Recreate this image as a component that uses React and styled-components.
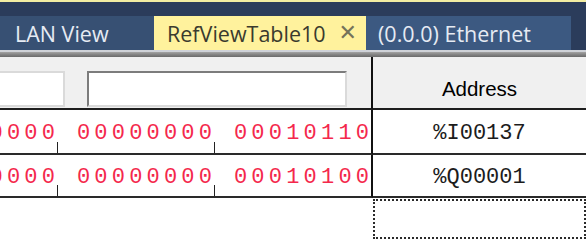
import React from "react";
import styled, { createGlobalStyle } from "styled-components";

const GlobalStyle = createGlobalStyle`
  body {
    margin: 0;
    background: #ffffff;
    overflow: hidden;
  }
`;

const Page = styled.div`
  width: 586px;
  height: 240px;
  overflow: hidden;
  background: #ffffff;
`;

const TabStrip = styled.div`
  display: flex;
  align-items: flex-end;
  height: 48px;
  border-top: 2px solid #f2eda2;
  background: #2b3c5b;
`;

const Tab = styled.div`
  display: flex;
  align-items: center;
  justify-content: space-between;
  box-sizing: border-box;
  width: ${props => props.width}px;
  height: 34px;
  padding: 0 ${props => (props.active ? 9 : 0)}px 0 ${props => props.pad}px;
  background: ${props =>
    props.active ? "#fff29d" : props.tone === "light" ? "#3c5981" : "#375073"};
  color: ${props => (props.active ? "#3a3a2e" : "#e6ebf3")};
  font-family: "Open Sans", "Noto Sans", sans-serif;
  font-size: 21.5px;
  white-space: nowrap;
`;

const Close = styled.span`
  color: #75735a;
  font-family: "DejaVu Sans", sans-serif;
  font-size: 22px;
  line-height: 1;
`;

const TabRule = styled.div`
  height: 7px;
  background: linear-gradient(
    #cfd2d8 0,
    #cfd2d8 2px,
    #a4a4a4 2px,
    #8a8a8a 4px,
    #6a6a6a 7px
  );
`;

const Grid = styled.div`
  display: grid;
  grid-template-columns: 373px 1fr;
`;

const HeadCell = styled.div`
  display: flex;
  align-items: center;
  justify-content: ${props => (props.bits ? "flex-end" : "center")};
  gap: 22px;
  box-sizing: border-box;
  height: 53px;
  padding: 12px ${props => (props.bits ? 24 : 0)}px 0 0;
  background: #f0f0f0;
  border-bottom: 2px solid #1e1e1e;
  border-right: ${props => (props.bits ? "2px solid #111" : "none")};
  overflow: hidden;
  font-family: "Liberation Sans", Arial, sans-serif;
  font-size: 20.5px;
  color: #000;
`;

const FilterBox = styled.div`
  flex: none;
  box-sizing: border-box;
  width: ${props => props.width}px;
  height: 36px;
  background: #ffffff;
  border: 2px solid #dadada;
  border-top-color: ${props => (props.sunken ? "#7c7c7c" : "#dadada")};
  border-left-color: ${props => (props.sunken ? "#7c7c7c" : "#dadada")};
`;

const BitsCell = styled.div`
  display: flex;
  justify-content: flex-end;
  align-items: stretch;
  box-sizing: border-box;
  height: ${props => props.h}px;
  padding-right: 2px;
  border-bottom: 2px solid #2a2a2a;
  border-right: 2px solid #111;
  overflow: hidden;
`;

const Byte = styled.span`
  flex: none;
  display: flex;
  align-items: center;
  padding-top: 4px;
  margin-right: -4.2px;
  font-family: "Liberation Mono", "Courier New", monospace;
  font-size: 22px;
  letter-spacing: 4.2px;
  color: #f4284c;
  white-space: nowrap;
`;

const Tick = styled.span`
  flex: none;
  align-self: flex-end;
  width: 1px;
  height: 11px;
  margin: 0 19px 0 2px;
  background: #222;
`;

const AddrCell = styled.div`
  display: flex;
  align-items: center;
  justify-content: center;
  box-sizing: border-box;
  height: ${props => props.h}px;
  padding-top: 3px;
  border-bottom: 2px solid #2a2a2a;
  font-family: "Liberation Mono", "Courier New", monospace;
  font-size: 22px;
  color: #1c1c1c;
`;

const EmptyCell = styled.div`
  height: 42px;
`;

const FocusCell = styled.div`
  box-sizing: border-box;
  height: 40px;
  margin: 1px 0 0 0;
  border: 2px dotted #2a2a2a;
`;

const rows = [
  { bytes: ["00000000", "00000000", "00010110"], addr: "%I00137", h: 45 },
  { bytes: ["00000000", "00000000", "00010100"], addr: "%Q00001", h: 43 }
];

export default () => {
  return (
    <Page>
      <GlobalStyle />
      <TabStrip>
        <Tab width={154} pad={15}>
          LAN View
        </Tab>
        <Tab width={212} pad={13} active>
          RefViewTable10
          <Close>✕</Close>
        </Tab>
        <Tab width={205} pad={12} tone="light">
          (0.0.0) Ethernet
        </Tab>
      </TabStrip>
      <TabRule />
      <Grid>
        <HeadCell bits>
          <FilterBox width={80} />
          <FilterBox width={260} sunken />
        </HeadCell>
        <HeadCell>Address</HeadCell>
        {rows.map(row => (
          <React.Fragment key={row.addr}>
            <BitsCell h={row.h}>
              {row.bytes.map((b, i) => (
                <React.Fragment key={i}>
                  {i > 0 && <Tick />}
                  <Byte>{b}</Byte>
                </React.Fragment>
              ))}
            </BitsCell>
            <AddrCell h={row.h}>{row.addr}</AddrCell>
          </React.Fragment>
        ))}
        <EmptyCell />
        <FocusCell />
      </Grid>
    </Page>
  );
};
